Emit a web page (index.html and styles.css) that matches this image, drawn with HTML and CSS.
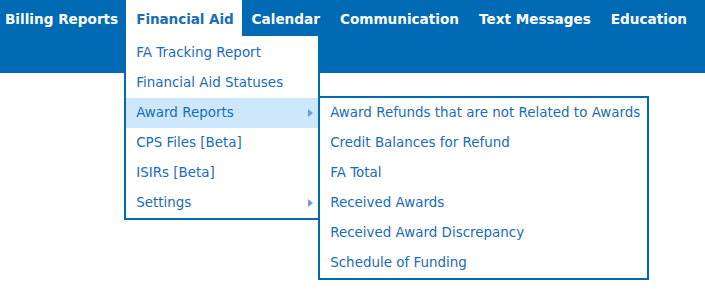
FILE: index.html
```html
<!DOCTYPE html>
<html lang="en">
<head>
    <meta charset="UTF-8">
    <title>Financial Aid Menu</title>
    <link rel="stylesheet" href="styles.css">
</head>
<body>
    <div class="topbar">
        <ul class="nav">
            <li class="nav-item first">Billing Reports</li>
            <li class="nav-item active">
                Financial Aid
                <ul class="dropdown">
                    <li>FA Tracking Report</li>
                    <li>Financial Aid Statuses</li>
                    <li class="has-sub hover">
                        Award Reports
                        <ul class="submenu">
                            <li>Award Refunds that are not Related to Awards</li>
                            <li>Credit Balances for Refund</li>
                            <li>FA Total</li>
                            <li>Received Awards</li>
                            <li>Received Award Discrepancy</li>
                            <li>Schedule of Funding</li>
                        </ul>
                    </li>
                    <li>CPS Files [Beta]</li>
                    <li>ISIRs [Beta]</li>
                    <li class="has-sub">Settings</li>
                </ul>
            </li>
            <li class="nav-item">Calendar</li>
            <li class="nav-item">Communication</li>
            <li class="nav-item">Text Messages</li>
            <li class="nav-item">Education</li>
        </ul>
    </div>
    <div class="page"></div>
</body>
</html>
```
FILE: styles.css
```css
:root {
    --blue: #006ab4;
    --text-blue: #1a6cb6;
    --hover: #cde8fc;
}

html, body {
    min-height: 100%;
}

body {
    margin: 0;
    font-family: 'DejaVu Sans', Verdana, sans-serif;
    background: #fff;
}

ul {
    list-style: none;
    margin: 0;
    padding: 0;
}

.topbar {
    background: var(--blue);
    height: 73px;
}

.page {
    height: 221px;
}

.nav {
    display: flex;
}

.nav-item {
    position: relative;
    padding: 0 10px;
    height: 36px;
    line-height: 38px;
    font-size: 13.6px;
    font-weight: bold;
    color: #fff;
    white-space: nowrap;
}

.nav-item.first {
    padding: 0 8px 0 5px;
}

.nav-item.active {
    background: #fff;
    color: var(--text-blue);
    padding: 0 8px 0 10px;
    letter-spacing: -0.1px;
}

.dropdown {
    position: absolute;
    top: 36px;
    left: -2px;
    width: 192px;
    padding-top: 2px;
    border: 2px solid var(--blue);
    border-top: none;
    background: #fff;
    letter-spacing: normal;
    z-index: 2;
}

.dropdown li,
.submenu li {
    position: relative;
    height: 30px;
    line-height: 30px;
    padding-left: 10px;
    font-size: 13.45px;
    font-weight: normal;
    color: var(--text-blue);
}

.dropdown li.hover {
    background: var(--hover);
}

.has-sub::after {
    content: "";
    position: absolute;
    right: 5px;
    top: 11px;
    border-left: 5px solid #6c9ddf;
    border-top: 4px solid transparent;
    border-bottom: 4px solid transparent;
}

.submenu {
    position: absolute;
    top: -2px;
    left: 192px;
    width: 327px;
    border: 2px solid var(--blue);
    background: #fff;
}

.submenu li {
    background: #fff;
}
```
